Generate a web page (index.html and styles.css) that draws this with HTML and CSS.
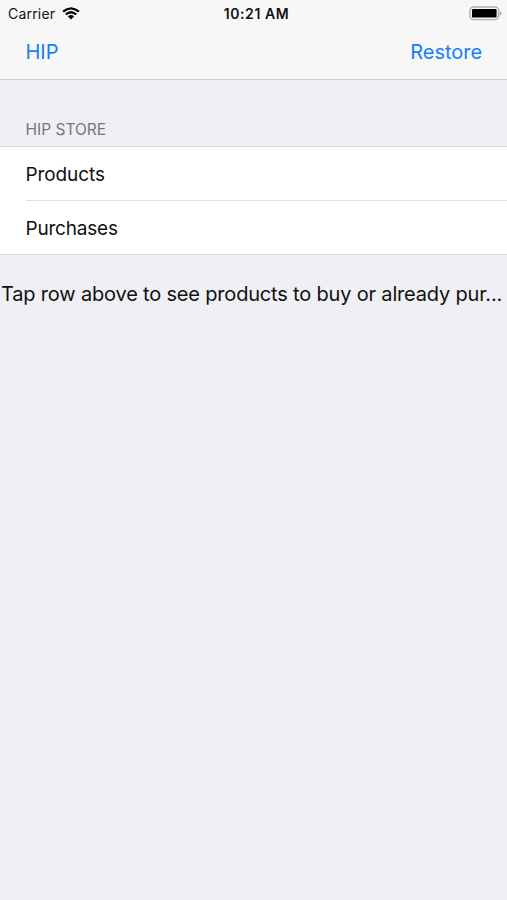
FILE: index.html
```html
<!DOCTYPE html>
<html lang="en">
   <head>
      <meta charset="UTF-8">
      <meta name="viewport" content="width=device-width, initial-scale=1.0">
      <title>HIP Store</title>
      <link rel="stylesheet" href="styles.css">
   </head>
   <body>
      <header>
         <div class="status-bar">
            <div class="carrier">
               <span>Carrier</span>
               <svg class="wifi" width="18" height="13" viewBox="0 0 18 13">
                  <path d="M1.1 4.7 Q9 -2 16.9 4.7 M3.8 7.5 Q9 3 14.2 7.5" fill="none" stroke="#000" stroke-width="2.3"/>
                  <path d="M5.9 9.4 Q9 6.8 12.1 9.4 L9 12.6 Z" fill="#000"/>
               </svg>
            </div>
            <span class="time">10:21 AM</span>
            <svg class="battery" width="33" height="15" viewBox="0 0 33 15">
               <rect x="1" y="1" width="28.6" height="12.6" rx="3.6" fill="#f7f7f8" stroke="#b0b0b0" stroke-width="1.4"/>
               <rect x="3" y="3" width="24.6" height="8.6" rx="1.2" fill="#000"/>
               <path d="M30.8 5.2 Q32.4 5.8 32.4 7.3 T30.8 9.4 Z" fill="#a0a0a0"/>
            </svg>
         </div>
         <nav>
            <a class="back">HIP</a>
            <a class="restore">Restore</a>
         </nav>
      </header>
      <main>
         <h2>HIP STORE</h2>
         <ul>
            <li><span class="products">Products</span></li>
            <li><span class="purchases">Purchases</span></li>
         </ul>
         <p>Tap row above to see products to buy or already pur...</p>
      </main>
   </body>
</html>
```
FILE: styles.css
```css
* {
box-sizing: border-box;
}
body {
margin: 0;
font-family: Inter, "Liberation Sans", sans-serif;
background-color: #efeff4;
color: #111;
}
header {
height: 80px;
background-color: #f7f7f8;
border-bottom: 1px solid #cfcfd2;
}
.status-bar {
display: grid;
grid-template-columns: 1fr auto 1fr;
align-items: center;
height: 27px;
padding: 0 5px 0 8px;
}
.carrier {
display: flex;
align-items: center;
gap: 7px;
font-size: 14px;
letter-spacing: 0.2px;
}
.time {
padding-left: 3px;
font-size: 14px;
font-weight: 600;
letter-spacing: 0.55px;
}
.battery {
justify-self: end;
}
nav {
display: flex;
justify-content: space-between;
padding: 0 25px 0 25.5px;
font-size: 20px;
line-height: 51px;
color: #147efb;
}
.restore {
letter-spacing: -0.05px;
}
h2 {
margin: 0;
padding: 38px 25.5px 0;
height: 66px;
font-size: 15.5px;
font-weight: 400;
line-height: 24px;
color: #77777c;
}
ul {
margin: 0;
padding: 0 0 0 25.5px;
list-style: none;
background-color: #fff;
border-top: 1px solid #dadadd;
border-bottom: 1px solid #dadadd;
}
li {
height: 53px;
font-size: 19px;
line-height: 55px;
letter-spacing: -0.1px;
}
li + li {
height: 54px;
border-top: 1px solid #e2e2e4;
}
.purchases {
letter-spacing: -0.2px;
}
p {
margin: 25px 0 0 1px;
font-size: 20px;
line-height: 28px;
letter-spacing: -0.18px;
white-space: nowrap;
}
```
